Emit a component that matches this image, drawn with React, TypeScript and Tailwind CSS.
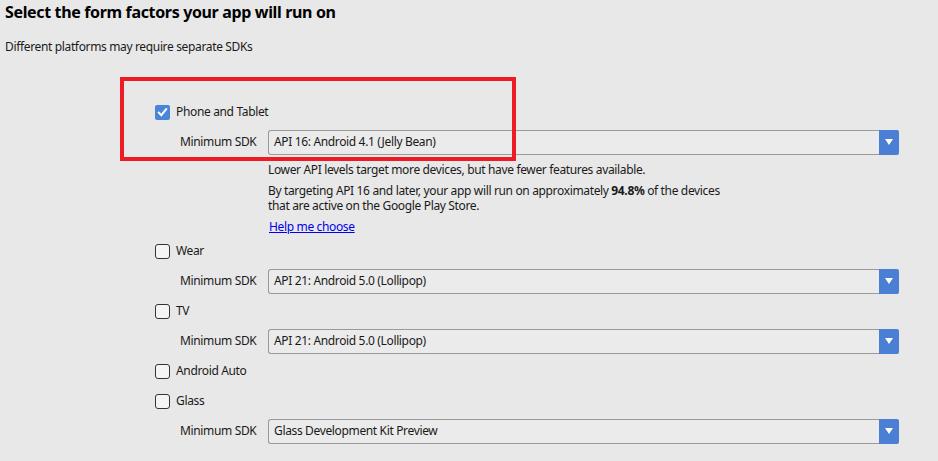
import React from "react";

const font = { fontFamily: '"Noto Sans", "Open Sans", sans-serif' };

function Checkbox({ checked }: { checked?: boolean }) {
  if (checked) {
    return (
      <div className="w-[15px] h-[15px] rounded-[2px] bg-[#4a86d8] flex items-center justify-center shrink-0">
        <svg width="11" height="11" viewBox="0 0 11 11">
          <path d="M1.8 5.6 L4.3 8.2 L9.2 2.2" fill="none" stroke="white" strokeWidth="2" strokeLinecap="square" />
        </svg>
      </div>
    );
  }
  return <div className="w-[15px] h-[15px] rounded-[3px] border border-[#333] bg-[#f4f4f4] shrink-0" />;
}

function CheckRow({ label, checked }: { label: string; checked?: boolean }) {
  return (
    <div className="h-[30px] flex items-center pl-[155px]">
      <Checkbox checked={checked} />
      <span className="ml-[6px] text-[12px] tracking-[-0.35px] text-[#1a1a1a]">{label}</span>
    </div>
  );
}

function SdkRow({ value }: { value: string }) {
  return (
    <div className="h-[30px] flex items-center">
      <span className="w-[268px] pl-[180px] text-[12px] tracking-[-0.35px] text-[#1a1a1a] shrink-0">Minimum SDK</span>
      <div className="flex h-[25px] w-[631px]">
        <div className="flex-1 flex items-center pl-[5px] border border-r-0 border-[#9a9a9a] rounded-l-[3px] bg-[#ebebeb] text-[12px] tracking-[-0.35px] text-[#1a1a1a]">
          {value}
        </div>
        <div className="w-[20px] bg-[#4a7fd4] rounded-r-[2px] flex items-center justify-center">
          <svg width="8" height="6" viewBox="0 0 8 6">
            <path d="M0 0 H8 L4 6 Z" fill="white" />
          </svg>
        </div>
      </div>
    </div>
  );
}

export default function App() {
  return (
    <div className="relative w-[938px] h-[461px] bg-[#e8e8e8] overflow-hidden" style={font}>
      <div className="pl-[5px] pt-[1px] h-[32px] text-[16px] font-bold tracking-[-0.35px] text-black leading-[22px]">
        Select the form factors your app will run on
      </div>
      <div className="pl-[5px] h-[65px] text-[12px] tracking-[-0.35px] text-[#1a1a1a] leading-[30px]">
        Different platforms may require separate SDKs
      </div>
      <CheckRow label="Phone and Tablet" checked />
      <SdkRow value="API 16: Android 4.1 (Jelly Bean)" />
      <div className="pl-[268px] text-[12px] tracking-[-0.35px] text-[#1a1a1a] leading-[15px] pt-[5px] h-[79px]">
        <div>Lower API levels target more devices, but have fewer features available.</div>
        <div className="mt-[6px]">
          By targeting API 16 and later, your app will run on approximately <b>94.8%</b> of the devices
          <br />
          that are active on the Google Play Store.
        </div>
        <div className="mt-[6px] pl-[1px]">
          <span className="text-[#0000ee] underline">Help me choose</span>
        </div>
      </div>
      <CheckRow label="Wear" />
      <SdkRow value="API 21: Android 5.0 (Lollipop)" />
      <CheckRow label="TV" />
      <SdkRow value="API 21: Android 5.0 (Lollipop)" />
      <CheckRow label="Android Auto" />
      <CheckRow label="Glass" />
      <SdkRow value="Glass Development Kit Preview" />
      <div className="absolute left-[120px] top-[77px] w-[396px] h-[84px] border-4 border-[#ed1c24]" />
    </div>
  );
}
